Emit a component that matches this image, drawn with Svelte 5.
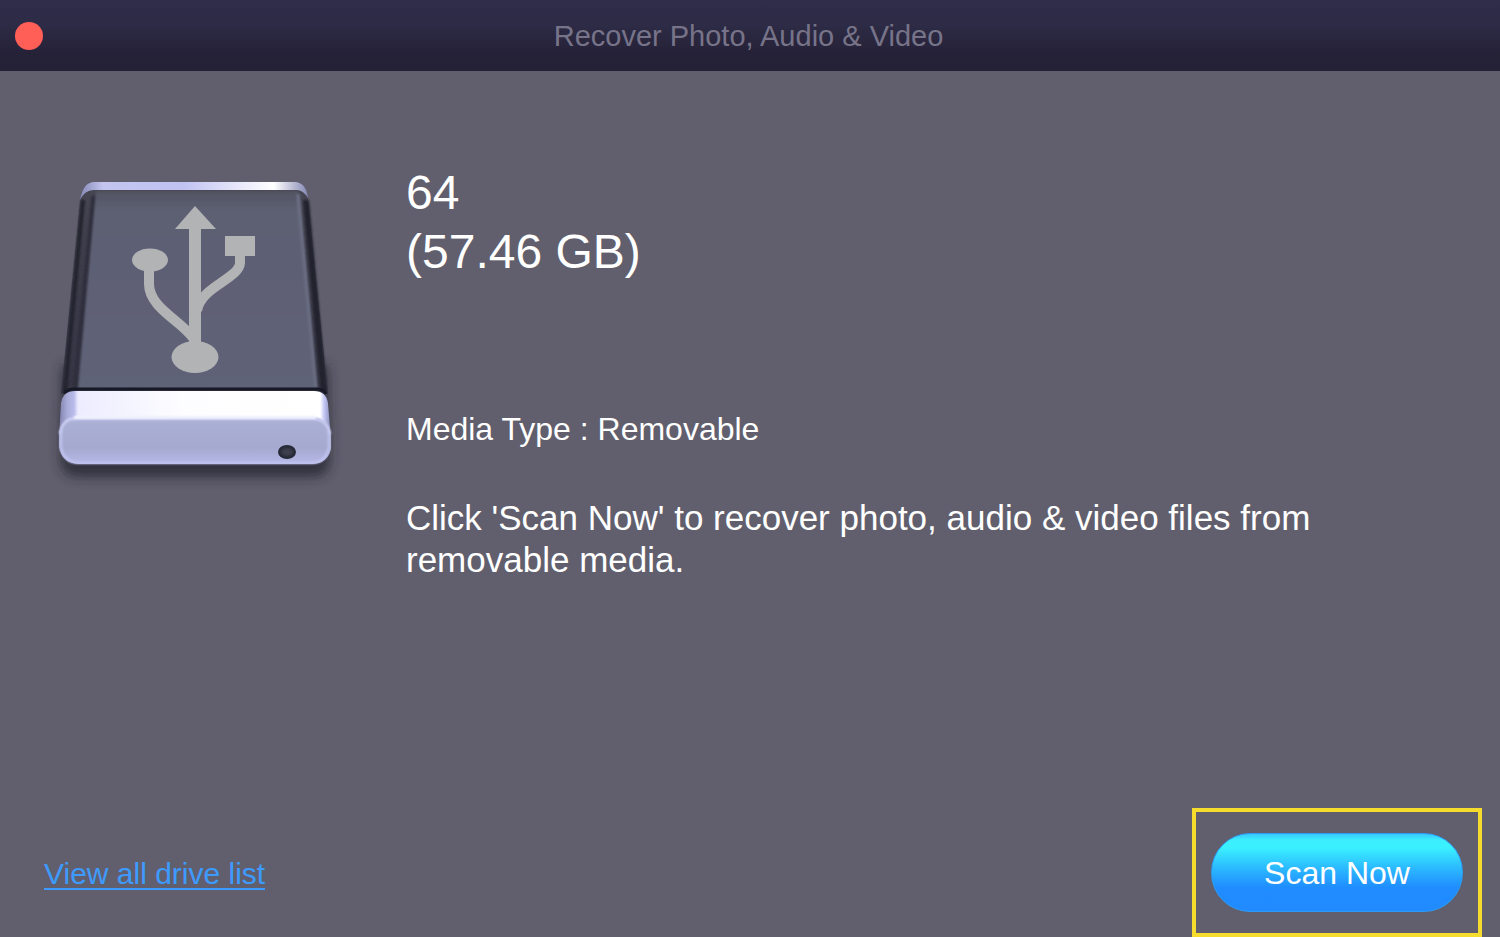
<script lang="ts">
	const drive = {
		name: '64',
		size: '57.46 GB',
		mediaType: 'Removable'
	};
</script>

<div class="window">
	<header>
		<button class="close" type="button" aria-label="Close"></button>
		<h1>Recover Photo, Audio &amp; Video</h1>
	</header>

	<main>
		<svg class="drive-icon" viewBox="0 0 310 340" aria-hidden="true">
			<defs>
				<linearGradient id="body" x1="0" x2="0" y1="0" y2="1">
					<stop offset="0" stop-color="#474753" />
					<stop offset="0.3" stop-color="#3f3f4c" />
					<stop offset="1" stop-color="#353544" />
				</linearGradient>
				<linearGradient id="glass" x1="0" x2="0" y1="0" y2="1">
					<stop offset="0" stop-color="#525462" />
					<stop offset="0.1" stop-color="#5d6073" />
					<stop offset="1" stop-color="#5f6378" />
				</linearGradient>
				<linearGradient id="rim" x1="0" x2="1" y1="0" y2="0">
					<stop offset="0" stop-color="#8588b5" />
					<stop offset="0.1" stop-color="#c3c5f0" />
					<stop offset="0.45" stop-color="#c0c2f2" />
					<stop offset="0.85" stop-color="#ffffff" />
					<stop offset="1" stop-color="#8588b5" />
				</linearGradient>
				<linearGradient id="lip" x1="0" x2="1" y1="0" y2="0">
					<stop offset="0" stop-color="#7f82ab" />
					<stop offset="0.03" stop-color="#a9abd8" />
					<stop offset="0.055" stop-color="#b9bbea" />
					<stop offset="0.07" stop-color="#ececff" />
					<stop offset="0.45" stop-color="#fdfdff" />
					<stop offset="0.96" stop-color="#ffffff" />
					<stop offset="0.975" stop-color="#c4c6f4" />
					<stop offset="1" stop-color="#8689b5" />
				</linearGradient>
				<linearGradient id="front" x1="0" x2="0" y1="0" y2="1">
					<stop offset="0" stop-color="#c0c4ee" />
					<stop offset="0.12" stop-color="#aaafd4" />
					<stop offset="0.65" stop-color="#a5a9d0" />
					<stop offset="1" stop-color="#b6b9e6" />
				</linearGradient>
				<filter id="blur" x="-20%" y="-40%" width="140%" height="180%">
					<feGaussianBlur stdDeviation="6" />
				</filter>
				<filter id="soft" x="-20%" y="-20%" width="140%" height="140%">
					<feGaussianBlur stdDeviation="1" />
				</filter>
			</defs>
			<path d="M22 205H288L290 300Q289 317 273 317H38Q22 317 20 300Z" fill="#24242e" opacity="0.75" filter="url(#blur)" />
			<path d="M40 41Q42 22 54 22H256Q266 23 268 41L288 234H21Z" fill="url(#body)" />
			<path d="M43 40L25 232" fill="none" stroke="#22222f" stroke-width="4" filter="url(#soft)" />
			<path d="M54 36L35 228" fill="none" stroke="#2e2e3d" stroke-width="5" filter="url(#soft)" />
			<path d="M266 40L284 232" fill="none" stroke="#22222f" stroke-width="6" filter="url(#soft)" />
			<path d="M56 31H258L276 229H38Z" fill="url(#glass)" filter="url(#soft)" />
			<path d="M258 34L276 228" fill="none" stroke="#6e7287" stroke-width="3" filter="url(#soft)" />
			<path d="M40 40Q43 22 54 22H256Q266 23 268 38Q263 30 257 30H53Q45 30 40 40Z" fill="url(#rim)" />
			<path d="M24 233Q28 229 34 229H276Q284 229 286 234" fill="none" stroke="#171927" stroke-width="3" />
			<path d="M21 243Q23 231 35 231H274Q286 231 288 243L291 280H19Z" fill="url(#lip)" />
			<path d="M19 276Q20 258 35 257H273Q289 258 291 276V289Q287 304 272 304H38Q22 303 19 287Z" fill="url(#front)" />
			<path d="M20 274Q22 259 36 258H272Q287 259 290 274" fill="none" stroke="#d3d6f8" stroke-width="2" filter="url(#soft)" />
			<path d="M34 256H276V259H34Z" fill="#f5f6ff" filter="url(#soft)" />
			<path d="M21 270V287Q24 303 39 303H271Q286 303 289 287V270" fill="none" stroke="#c4c7f2" stroke-width="2" filter="url(#soft)" />
			<ellipse cx="247" cy="292" rx="9" ry="7" fill="#262936" />
			<ellipse cx="247" cy="292" rx="6" ry="4" fill="#3d3f4b" filter="url(#soft)" />
			<g fill="#b1b3b4">
				<path d="M155 46L176 69H161V185H149V69H135Z" />
				<ellipse cx="110" cy="100" rx="18" ry="11.5" />
				<rect x="185" y="76" width="30" height="20" />
				<ellipse cx="155" cy="197" rx="23.5" ry="16" />
			</g>
			<g fill="none" stroke="#b1b3b4" stroke-width="10">
				<path d="M109 106V124C109 148 142 161 154 179" />
				<path d="M200 92V103C199 119 160 127 157 151" />
			</g>
		</svg>

		<section class="details">
			<h2>{drive.name}<br />({drive.size})</h2>
			<p class="media-type">Media Type : {drive.mediaType}</p>
			<p class="hint">
				Click 'Scan Now' to recover photo, audio &amp; video files from removable media.
			</p>
		</section>
	</main>

	<footer>
		<a href="#drives">View all drive list</a>
		<div class="highlight">
			<button class="scan" type="button">Scan Now</button>
		</div>
	</footer>
</div>

<style>
	:global(body) {
		margin: 0;
		background: #615f6d;
	}

	.window {
		box-sizing: border-box;
		color: #fff;
		display: flex;
		flex-direction: column;
		font-family: 'Liberation Sans', Arial, sans-serif;
		min-height: 100vh;
	}

	header {
		align-items: center;
		background: linear-gradient(#2e2d4b, #2d2b45 35%, #252137 75%, #242035);
		display: grid;
		grid-template-columns: 28px 1fr 28px;
		height: 71px;
		padding: 0 18px 0 15px;
	}

	.close {
		background: #ff5f57;
		border: 0;
		border-radius: 50%;
		height: 28px;
		padding: 0;
		width: 28px;
	}

	h1 {
		color: #777489;
		font-size: 29px;
		font-weight: 400;
		margin: 0;
		padding-top: 2px;
		text-align: center;
	}

	main {
		align-items: flex-start;
		display: flex;
		flex: 1;
		gap: 56px;
		padding: 89px 160px 0 40px;
	}

	.drive-icon {
		flex: none;
		width: 310px;
	}

	.details {
		flex: 1;
		padding-top: 3px;
	}

	h2 {
		font-size: 48px;
		font-weight: 400;
		line-height: 59px;
		margin: 0;
	}

	p {
		line-height: 42px;
		margin: 0;
	}

	.media-type {
		font-size: 32px;
		margin-top: 127px;
	}

	.hint {
		font-size: 35px;
		margin-top: 47px;
	}

	footer {
		align-items: center;
		display: flex;
		justify-content: space-between;
		padding: 0 18px 0 44px;
	}

	a {
		border-bottom: 2px solid #3d9bff;
		color: #3d9bff;
		font-size: 30px;
		line-height: 28px;
		margin-top: 4px;
		text-decoration: none;
	}

	.highlight {
		border: 4px solid #f6dc2c;
		padding: 21px 15px;
	}

	.scan {
		background: linear-gradient(#38c8ff, #3cefff 8%, #3af0ff 18%, #2bb8ff 45%, #1f8cff 70%, #218aff);
		border: 1px solid #2d9cf4;
		border-radius: 39px;
		color: #fff;
		font: inherit;
		font-size: 32px;
		height: 79px;
		padding: 2px 0 0;
		width: 252px;
	}
</style>
